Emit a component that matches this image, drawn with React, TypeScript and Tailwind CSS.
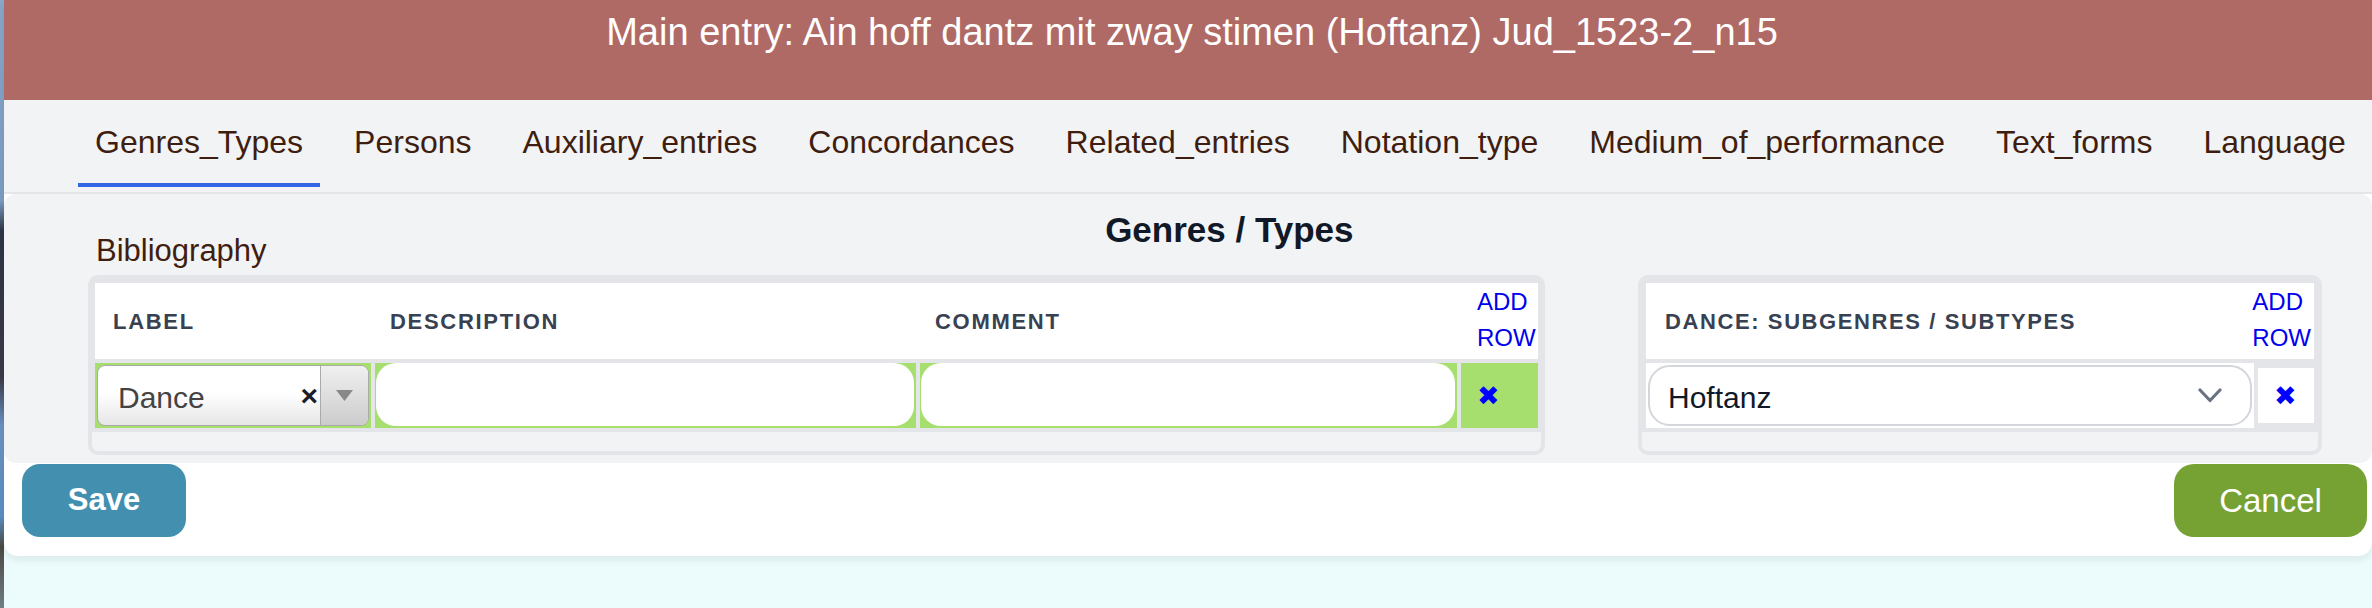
import { Fragment } from 'react';

const tabs = [
  'Genres_Types',
  'Persons',
  'Auxiliary_entries',
  'Concordances',
  'Related_entries',
  'Notation_type',
  'Medium_of_performance',
  'Text_forms',
  'Language',
];

const DeleteMark = () => (
  <span className="font-['DejaVu_Sans',sans-serif] text-[27px] leading-none text-[#0000ff]">✖</span>
);

const AddRow = () => (
  <div className="self-start pt-[1px] text-[24px] leading-[36px] text-[#0000ee]">
    ADD
    <br />
    ROW
  </div>
);

const LabelSelect = () => (
  <div className="h-full flex rounded-[8px] border border-[#aaaaaa] bg-[linear-gradient(to_bottom,#ffffff_45%,#e6e6e6_100%)] overflow-hidden">
    <div className="flex-1 flex items-center pl-[20px] pt-[3px] text-[30px] text-[#444444]">Dance</div>
    <div className="flex items-center pr-[2px] text-[30px] font-bold text-[#1c1c2a]">×</div>
    <div className="w-[48px] border-l border-[#aaaaaa] bg-[linear-gradient(to_bottom,#f0f0f0,#cccccc)] flex items-center justify-center">
      <svg width="17" height="11" viewBox="0 0 17 11">
        <polygon points="0,0 17,0 8.5,11" fill="#888888" />
      </svg>
    </div>
  </div>
);

const GenresTable = () => (
  <div className="w-[1457px] shrink-0 border-4 border-[#e4e5e9] rounded-[10px] bg-[#f2f3f5] pb-[19px]">
    <div className="bg-[#e4e5e9] px-[3px] py-[4px] flex flex-col gap-[4px]">
      <div className="grid grid-cols-[276px_541px_537px_77px] gap-x-[4px] bg-white h-[76px] items-center text-[22px] font-bold tracking-[1.7px] text-[#384152]">
        <div className="pl-[18px]">LABEL</div>
        <div className="pl-[15px]">DESCRIPTION</div>
        <div className="pl-[15px]">COMMENT</div>
        <div className="pl-[16px] self-start font-normal tracking-normal">
          <AddRow />
        </div>
      </div>
      <div className="grid grid-cols-[276px_541px_537px_77px] gap-x-[4px] h-[65px]">
        <div className="bg-[#a6df6d] p-[2px]">
          <LabelSelect />
        </div>
        <div className="bg-[#a6df6d] pl-[1px] pr-[2px] pt-0 pb-[2px]">
          <div className="h-full bg-white rounded-[20px]" />
        </div>
        <div className="bg-[#a6df6d] pl-[1px] pr-[2px] pt-0 pb-[2px]">
          <div className="h-full bg-white rounded-[20px]" />
        </div>
        <div className="bg-[#a6df6d] flex items-center pl-[16px]">
          <DeleteMark />
        </div>
      </div>
    </div>
  </div>
);

const SubtypesTable = () => (
  <div className="w-[684px] shrink-0 border-4 border-[#e4e5e9] rounded-[10px] bg-[#f2f3f5] pb-[19px]">
    <div className="bg-[#e4e5e9] p-[4px] flex flex-col gap-[4px]">
      <div className="flex bg-white h-[76px] items-center">
        <div className="pl-[19px] text-[22px] font-bold tracking-[1.6px] text-[#384152]">
          DANCE: SUBGENRES / SUBTYPES
        </div>
        <div className="ml-auto self-start pr-[3px]">
          <AddRow />
        </div>
      </div>
      <div className="flex gap-[4px] h-[65px]">
        <div className="w-[608px] bg-white p-[2px]">
          <div className="h-full flex items-center rounded-[22px] border-2 border-[#d4d6db] pl-[18px] pr-[28px]">
            <span className="flex-1 pt-[3px] text-[30px] text-[#111827]">Hoftanz</span>
            <svg width="24" height="15" viewBox="0 0 24 15" fill="none">
              <polyline points="2,2 12,12.5 22,2" stroke="#6b7280" strokeWidth="3.2" strokeLinecap="round" strokeLinejoin="round" />
            </svg>
          </div>
        </div>
        <div className="flex-1 bg-white my-[5px] flex items-center pl-[16px]">
          <DeleteMark />
        </div>
      </div>
    </div>
  </div>
);

export default function App() {
  return (
    <div className="flex w-[2372px] h-[608px] overflow-hidden bg-[#ecfcfd] font-['Liberation_Sans',Arial,sans-serif]">
      {/* desktop peeking out on the left */}
      <div className="w-[4px] shrink-0 bg-[linear-gradient(to_bottom,#88a7c9_0%,#7c9cc3_33%,#2e3546_38%,#3b3a47_62%,#6a92c2_70%,#5c8ec4_85%,#4a4a42_90%,#6f7d85_100%)]" />

      <div className="flex-1 min-w-0">
        <div className="bg-white rounded-b-[14px] shadow-[0_4px_8px_rgba(0,0,0,0.08)]">
          <header className="h-[100px] bg-[#af6a66] pt-[11px] pl-[8px] text-center text-white text-[38px] leading-[42px]">
            Main entry: Ain hoff dantz mit zway stimen (Hoftanz) Jud_1523-2_n15
          </header>

          <nav className="flex gap-[17px] pl-[74px] pb-[5px] bg-[#f2f3f5] border-b-2 border-[#e4e5e9]">
            {tabs.map((tab, i) => (
              <Fragment key={tab}>
                <button
                  className={`px-[17px] pt-[25px] pb-[23px] border-b-4 text-[32px] leading-[35px] text-[#401e0f] ${
                    i === 0 ? 'border-[#3467e5]' : 'border-transparent'
                  }`}
                >
                  {tab}
                </button>
              </Fragment>
            ))}
          </nav>

          <main className="bg-[#f2f3f5] rounded-[12px] pl-[84px] pr-[50px] pt-[16px] pb-[8px]">
            <div className="flex h-[58px]">
              <div className="pl-[8px] pt-[24px] text-[31px] leading-[34px] text-[#401e0f]">Bibliography</div>
              <h2 className="flex-1 pr-[130px] text-center text-[35px] leading-[40px] font-bold text-[#111827]">
                Genres / Types
              </h2>
            </div>
            <div className="flex gap-[93px] mt-[7px]">
              <GenresTable />
              <SubtypesTable />
            </div>
          </main>

          <footer className="flex justify-between pl-[18px] pr-[5px] pt-[1px] pb-[19px]">
            <button className="w-[164px] h-[73px] rounded-[18px] bg-[#428fb0] text-white text-[31px] font-bold">
              Save
            </button>
            <button className="w-[193px] h-[73px] rounded-[20px] bg-[#76a133] text-white text-[33px]">
              Cancel
            </button>
          </footer>
        </div>
      </div>
    </div>
  );
}
